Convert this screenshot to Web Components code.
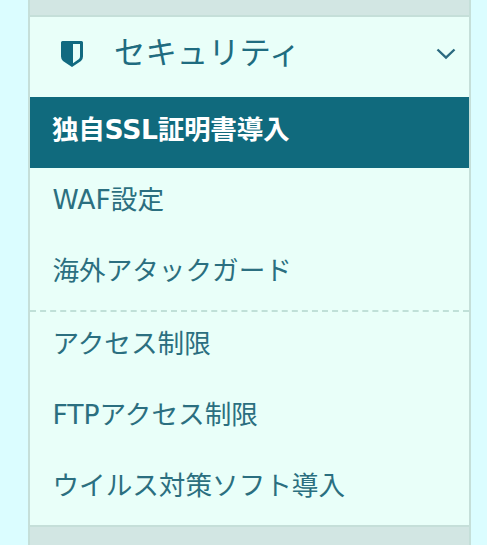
<!doctype html>
<html lang="ja"><head><meta charset="utf-8">
<style>
html,body{margin:0;height:545px;overflow:hidden;background:#dbfdff}
body{font-family:"DejaVu Sans","Noto Sans CJK JP",sans-serif;color:#2b6f80}
</style></head><body>
<side-nav>
  <nav-group label="セキュリティ">
    <nav-item active>独自SSL証明書導入</nav-item>
    <nav-item>WAF設定</nav-item>
    <nav-item>海外アタックガード</nav-item>
    <nav-item divided>アクセス制限</nav-item>
    <nav-item>FTPアクセス制限</nav-item>
    <nav-item>ウイルス対策ソフト導入</nav-item>
  </nav-group>
</side-nav>
<script>
class SideNav extends HTMLElement {
  constructor(){ super(); this.attachShadow({mode:'open'});
    this.shadowRoot.innerHTML=`<style>
      :host{display:flex;flex-direction:column;width:439px;height:545px;margin-left:28px;
        border:solid #c5dfd9;border-width:0 2px;background:#d2e6e3}
      .gap{height:15px;flex:none}
      </style><div class="gap"></div><slot></slot>`;
  }
}
customElements.define('side-nav',SideNav);

class NavGroup extends HTMLElement {
  constructor(){ super(); this.attachShadow({mode:'open'});
    this.shadowRoot.innerHTML=`<style>
      :host{display:block;background:#e9fff9;border:solid #c5dfd9;border-width:2px 0}
      .head{display:flex;align-items:center;height:74px;padding:0 13px 6px 31px;color:#1f6c80;font-size:31.4px;line-height:1}
      .shield{width:22px;height:26px;margin-right:31px;flex:none}
      .chev{width:20px;height:12px;margin-left:auto;flex:none}
      span{margin-bottom:1px}
      </style>
      <div class="head">
        <svg class="shield" viewBox="0 0 22 26"><path fill="#116a80" fill-rule="evenodd" d="M1.5 0H20.5Q22 0 22 1.5V15.5Q22 18 20 20L11 26L2 20Q0 18 0 15.5V1.5Q0 0 1.5 0ZM12 3V22.2L18 18Q19 17 19 15.5V3Z"/></svg>
        <span>${this.getAttribute('label')}</span>
        <svg class="chev" viewBox="0 0 20 12"><path fill="none" stroke="#2b6a80" stroke-width="2.4" d="M1.5 1.5L10 9.5L18.5 1.5"/></svg>
      </div>
      <slot></slot>`;
  }
}
customElements.define('nav-group',NavGroup);

class NavItem extends HTMLElement {
  constructor(){ super(); this.attachShadow({mode:'open'});
    this.shadowRoot.innerHTML=`<style>
      :host{display:flex;align-items:center;height:71px;box-sizing:border-box;padding:0 0 7px 22.5px;font-size:26.6px;line-height:1;color:#2b6f80;white-space:nowrap}
      :host([active]){background:#106a7d;color:#fff;font-weight:700;padding:0 0 4px 22px;letter-spacing:-.3px}
      :host([divided]){height:72px;border-top:2px dashed #c0e0d8;padding-bottom:6px}
      :host(:nth-child(5)){padding-bottom:5px}
      :host(:last-child){height:72px;padding-bottom:6px}
      </style><slot></slot>`;
  }
}
customElements.define('nav-item',NavItem);
</script>
</body></html>
